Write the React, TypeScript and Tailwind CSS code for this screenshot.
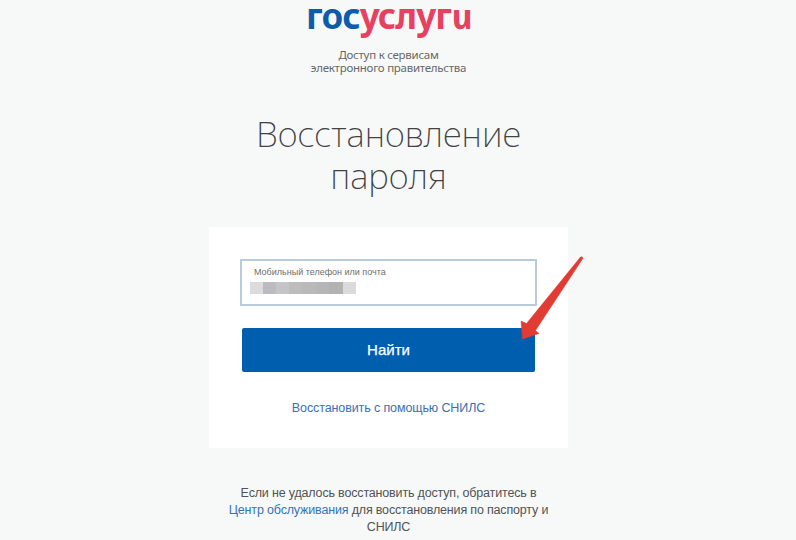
import React from "react";

const mosaic = [
  "w-[13px] bg-[#dcdcdd]",
  "w-[13px] bg-[#bbbbc0]",
  "w-[13px] bg-[#c5c5c8]",
  "w-[13px] bg-[#bdbdbe]",
  "w-[14px] bg-[#b9b9b9]",
  "w-[13px] bg-[#b6b6b7]",
  "w-[14px] bg-[#b2b2b3]",
  "w-[13px] bg-[#dbdbdb]",
];

function Logo() {
  return (
    <div className="flex h-[31px] w-[163px] items-end justify-center whitespace-nowrap font-['Noto_Sans',sans-serif] text-[35px] font-bold leading-[31px] tracking-[-0.9px]">
      <span className="text-[#0b5cab]">гос</span>
      <span className="text-[#e6415f]">
        услуг<span className="inline-block skew-x-[12deg] italic">и</span>
      </span>
    </div>
  );
}

function Arrow() {
  return (
    <svg
      className="absolute left-[518px] top-[254px]"
      width="68"
      height="88"
      viewBox="518 254 68 88"
      aria-hidden="true"
    >
      <path
        d="M580.5 257Q583 256 582.8 258.5L535.5 330.5L539 333.5L522.5 339L521 321L526.5 323.5Z"
        fill="#e13b33"
        stroke="#e13b33"
        strokeWidth="0.5"
        strokeLinejoin="round"
      />
    </svg>
  );
}

export default function App() {
  return (
    <main className="relative flex h-[540px] w-[796px] flex-col items-center overflow-hidden bg-[#f7f9f9] pr-[19px] font-['Liberation_Sans',Arial,sans-serif]">
      <Logo />
      <p className="mt-[17px] text-center font-['Noto_Sans',sans-serif] text-[11.5px] leading-[13px] tracking-[-0.26px] text-[#666869]">
        Доступ к сервисам
        <br />
        электронного правительства
      </p>
      <h1 className="mt-[39px] whitespace-nowrap text-center font-['Noto_Sans',sans-serif] text-[35px] font-extralight leading-[42px] text-[#404244]">
        Восстановление
        <br />
        пароля
      </h1>
      <section className="mt-[30px] flex h-[221px] w-[359px] shrink-0 flex-col items-center bg-white pt-[32px]">
        <div className="h-[47px] w-[297px] shrink-0 border-2 border-[#b9cadb] pl-[8px] pt-[6px]">
          <div className="whitespace-nowrap pl-[4px] text-[9px] leading-[11px] text-[#6e6e6e]">
            Мобильный телефон или почта
          </div>
          <div className="mt-[4px] flex h-[12px]">
            {mosaic.map((tile, i) => (
              <span key={i} className={tile} />
            ))}
          </div>
        </div>
        <button className="mt-[22px] h-[44px] w-[293px] shrink-0 rounded-[2px] bg-[#005eae] text-[15px] font-normal text-white [-webkit-text-stroke:0.25px_white]">
          Найти
        </button>
        <a className="mt-[28px] whitespace-nowrap text-[12.5px] leading-[16px] tracking-[-0.11px] text-[#3b6fb1]">
          Восстановить с помощью СНИЛС
        </a>
      </section>
      <p className="mt-[37px] whitespace-nowrap text-center text-[12.5px] leading-[17px] tracking-[-0.17px] text-[#515355]">
        Если не удалось восстановить доступ, обратитесь в
        <br />
        <a className="text-[#3474b8]">Центр обслуживания</a> для восстановления по паспорту и
        <br />
        СНИЛС
      </p>
      <Arrow />
    </main>
  );
}
